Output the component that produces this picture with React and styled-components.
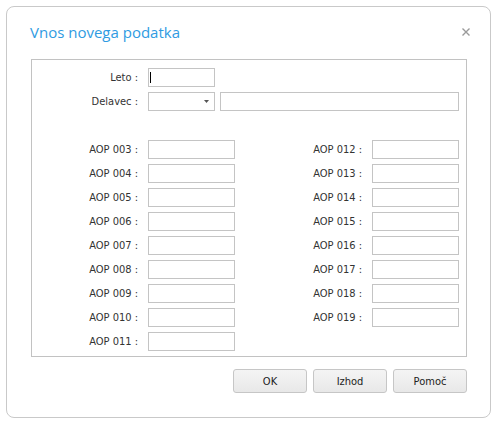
import React from "react";
import styled, { createGlobalStyle } from "styled-components";

const Global = createGlobalStyle`
  html, body { margin: 0; padding: 0; background: #ffffff; }
  body { font-family: "DejaVu Sans Condensed", "DejaVu Sans", sans-serif; }
  * { box-sizing: border-box; }
`;

const Dialog = styled.div`
  margin: 6px;
  width: 485px;
  height: 412px;
  border: 1px solid #c9c9c9;
  border-radius: 8px;
  background: #fff;
  display: flex;
  flex-direction: column;
  padding: 0 23px 24px 24px;
`;

const Header = styled.div`
  height: 52px;
  display: flex;
  align-items: flex-start;
  justify-content: space-between;
  padding-top: 15px;
`;

const Title = styled.h1`
  margin: 0;
  font-family: "Open Sans", "Noto Sans", sans-serif;
  font-weight: 400;
  font-size: 15px;
  line-height: 20px;
  color: #2f9be2;
  margin-left: -1px;
`;

const Close = styled.button`
  border: 0;
  background: none;
  padding: 0;
  margin: 6px -3px 0 0;
  width: 8px;
  height: 8px;
  display: flex;
  cursor: pointer;
`;

const Panel = styled.div`
  height: 298px;
  border: 1px solid #c2c2c2;
  padding: 8px 0 4px 0;
  display: flex;
  flex-direction: column;
  gap: 5px;
`;

const Row = styled.div`
  display: flex;
  align-items: center;
  height: 19px;
`;

const Columns = styled.div`
  display: flex;
  margin-top: 24px;
`;

const Column = styled.div`
  display: flex;
  flex-direction: column;
  gap: 5px;
`;

const Label = styled.label`
  width: ${(p) => p.$w || 106}px;
  text-align: right;
  font-size: 11px;
  color: #333;
  margin-right: ${(p) => p.$gap ?? 10}px;
  white-space: nowrap;
`;

const Input = styled.input`
  width: ${(p) => p.$w || 87}px;
  height: 19px;
  border: 1px solid #c4c4c4;
  background: #fff;
  padding: 0 3px;
  font: inherit;
  font-size: 11px;
  outline: none;
  margin-left: ${(p) => p.$ml || 0}px;
`;

const FocusWrap = styled.span`
  position: relative;
  display: inline-flex;
`;

const Caret = styled.span`
  position: absolute;
  left: 2px;
  top: 4px;
  width: 1px;
  height: 11px;
  background: #000;
`;

const Select = styled.div`
  width: 67px;
  height: 19px;
  border: 1px solid #c4c4c4;
  background: #fff;
  display: flex;
  align-items: center;
  justify-content: flex-end;
  padding-right: 5px;
`;

const Footer = styled.div`
  display: flex;
  justify-content: flex-end;
  gap: 6px;
  margin-top: 12px;
`;

const Button = styled.button`
  width: 74px;
  height: 24px;
  border: 1px solid #c6c6c6;
  border-radius: 3px;
  background: linear-gradient(#f4f4f4, #e8e8e8);
  font-family: "DejaVu Sans Condensed", "DejaVu Sans", sans-serif;
  font-size: 11px;
  color: #222;
  padding: 0;
`;

const left = ["003", "004", "005", "006", "007", "008", "009", "010", "011"];
const right = ["012", "013", "014", "015", "016", "017", "018", "019"];

export default function App() {
  return (
    <>
      <Global />
      <Dialog>
        <Header>
          <Title>Vnos novega podatka</Title>
          <Close aria-label="Zapri">
            <svg width="8" height="8" viewBox="0 0 8 8">
              <path d="M0.5 0.5 L7.5 7.5 M7.5 0.5 L0.5 7.5" stroke="#9a9a9a" strokeWidth="1.4" />
            </svg>
          </Close>
        </Header>
        <Panel>
          <Row>
            <Label>Leto :</Label>
            <FocusWrap>
              <Input $w={67} />
              <Caret />
            </FocusWrap>
          </Row>
          <Row>
            <Label>Delavec :</Label>
            <Select>
              <svg width="5" height="3" viewBox="0 0 5 3">
                <path d="M0 0 H5 L2.5 3 Z" fill="#555" />
              </svg>
            </Select>
            <Input $w={239} $ml={5} />
          </Row>
          <Columns>
            <Column>
              {left.map((n) => (
                <Row key={n}>
                  <Label>AOP {n} :</Label>
                  <Input />
                </Row>
              ))}
            </Column>
            <Column>
              {right.map((n) => (
                <Row key={n}>
                  <Label $w={127}>AOP {n} :</Label>
                  <Input />
                </Row>
              ))}
            </Column>
          </Columns>
        </Panel>
        <Footer>
          <Button>OK</Button>
          <Button>Izhod</Button>
          <Button>Pomoč</Button>
        </Footer>
      </Dialog>
    </>
  );
}
